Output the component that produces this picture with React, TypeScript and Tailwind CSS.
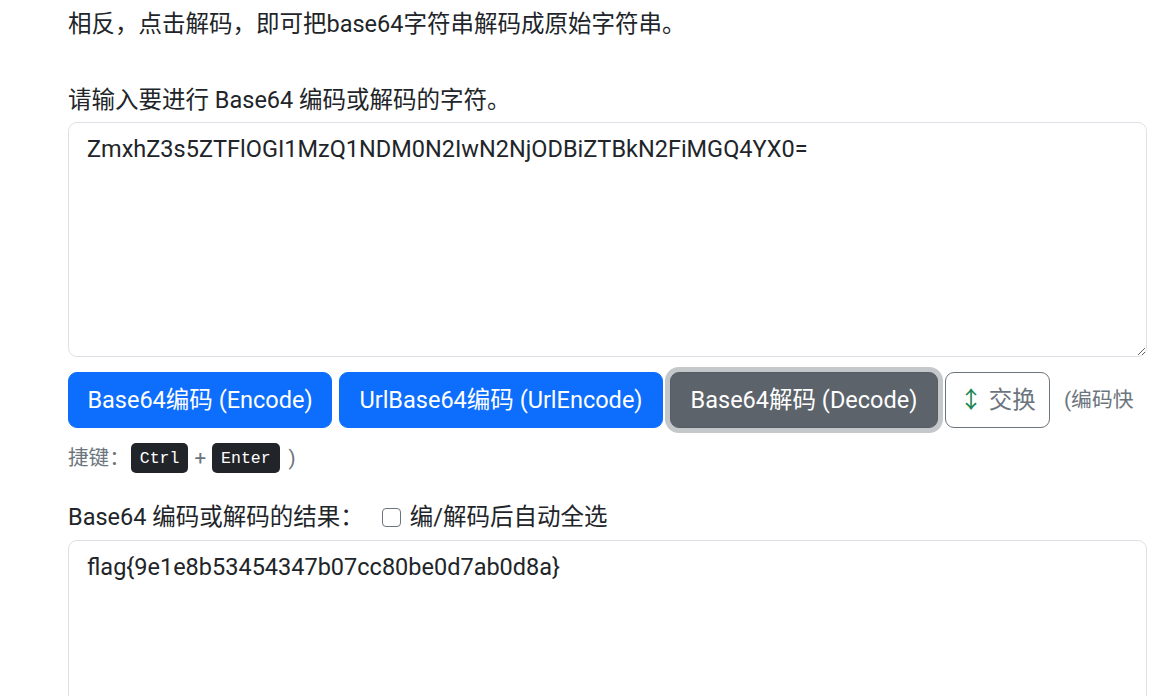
import React from "react";

const FONT = 'Roboto, "Noto Sans CJK SC", sans-serif';

export default function App() {
  return (
    <div
      className="w-[1161px] h-[696px] overflow-hidden bg-white text-[#212529] text-[23.5px] leading-[35px]"
      style={{ fontFamily: FONT }}
    >
      <div className="w-[1147px] pl-[68px] pt-[7px]">
        <p className="leading-[35px]">相反，点击解码，即可把base64字符串解码成原始字符串。</p>

        <div className="mt-[41px]">
          <label className="block leading-[35px] mb-[4px]">请输入要进行 Base64 编码或解码的字符。</label>
          <textarea
            className="block w-full h-[235px] border-[1.5px] border-[#dee2e6] rounded-[9px] px-[18px] py-[9px] leading-[35px] text-[23.5px] text-[#212529] resize-y outline-none"
            style={{ fontFamily: FONT }}
            defaultValue="ZmxhZ3s5ZTFlOGI1MzQ1NDM0N2IwN2NjODBiZTBkN2FiMGQ4YX0="
          />
        </div>

        <div className="mt-[15px] flex items-center gap-[7px]">
          <button className="w-[264px] h-[56px] rounded-[9px] bg-[#0d6efd] text-white border-[1.5px] border-[#0d6efd] flex items-center justify-center whitespace-nowrap">
            Base64编码 (Encode)
          </button>
          <button className="w-[324px] h-[56px] rounded-[9px] bg-[#0d6efd] text-white border-[1.5px] border-[#0d6efd] flex items-center justify-center whitespace-nowrap">
            UrlBase64编码 (UrlEncode)
          </button>
          <button className="w-[268px] h-[56px] rounded-[9px] bg-[#5c636a] text-white border-[1.5px] border-[#565e64] ring-[5px] ring-[#c4c8cb] flex items-center justify-center whitespace-nowrap">
            Base64解码 (Decode)
          </button>
          <button className="w-[105px] h-[56px] rounded-[9px] bg-white text-[#6c757d] border-[1.5px] border-[#6c757d] flex items-center justify-center whitespace-nowrap">
            <span className="text-[#198754] mr-[6px]">↕</span>交换
          </button>
          <span className="ml-[7px] text-[20.8px] text-[#6c757d] whitespace-nowrap">(编码快</span>
        </div>

        <div className="mt-[15px] h-[30px] flex items-center text-[20.6px] text-[#6c757d] whitespace-pre">
          <span className="mr-[1px]">捷键：</span>
          <kbd
            className="inline-flex items-center h-[30px] px-[9px] rounded-[5px] bg-[#212529] text-white text-[16.5px] font-normal"
            style={{ fontFamily: '"Liberation Mono", monospace' }}
          >
            Ctrl
          </kbd>
          <span className="px-[6px]">+</span>
          <kbd
            className="inline-flex items-center h-[30px] px-[9px] rounded-[5px] bg-[#212529] text-white text-[16.5px] font-normal"
            style={{ fontFamily: '"Liberation Mono", monospace' }}
          >
            Enter
          </kbd>
          <span className="pl-[9px]">)</span>
        </div>

        <div className="mt-[27px]">
          <div className="flex items-center leading-[35px] mb-[5px]">
            <span>Base64 编码或解码的结果：</span>
            <label className="flex items-center ml-[18px]">
              <span className="inline-block w-[19px] h-[19px] border-[1.5px] border-[#6c757d] rounded-[4px] bg-white mr-[9px]" />
              <span>编/解码后自动全选</span>
            </label>
          </div>
          <textarea
            className="block w-full h-[235px] border-[1.5px] border-[#dee2e6] rounded-[9px] px-[18px] py-[9px] leading-[35px] text-[23.5px] text-[#212529] resize-y outline-none"
            style={{ fontFamily: FONT }}
            defaultValue="flag{9e1e8b53454347b07cc80be0d7ab0d8a}"
          />
        </div>
      </div>
    </div>
  );
}
